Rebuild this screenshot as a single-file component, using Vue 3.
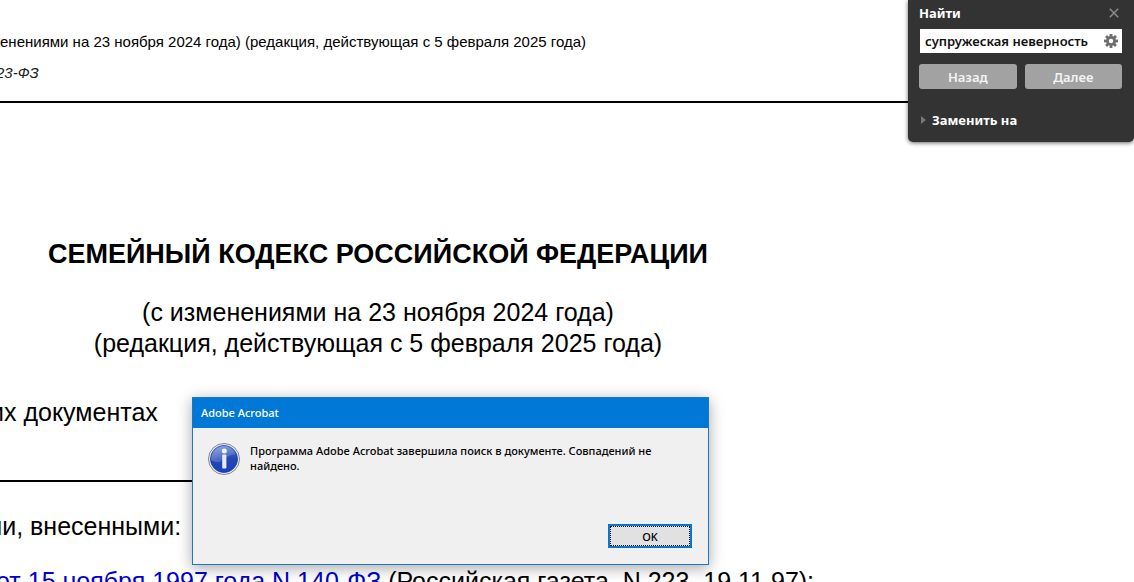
<script setup>
import { ref } from 'vue'

const query = ref('супружеская неверность')
const findOpen = ref(true)
const dialogOpen = ref(true)
const replaceOpen = ref(false)
</script>

<template>
  <div class="viewer">
    <main class="page">
      <header class="running">
        <p class="note">енениями на 23 ноября 2024 года) (редакция, действующая с 5 февраля 2025 года)</p>
        <p class="note number">23-ФЗ</p>
      </header>
      <hr class="rule" />
      <section class="heading">
        <h1>СЕМЕЙНЫЙ КОДЕКС РОССИЙСКОЙ ФЕДЕРАЦИИ</h1>
        <p>(с изменениями на 23 ноября 2024 года)</p>
        <p>(редакция, действующая с 5 февраля 2025 года)</p>
      </section>
      <p class="line">их документах</p>
      <hr class="rule second" />
      <p class="line changes">ми, внесенными:</p>
      <p class="line source"><a href="#law-140">от 15 ноября 1997 года N 140-ФЗ</a> (Российская газета, N 223, 19.11.97);</p>
    </main>

    <form v-if="findOpen" class="find" @submit.prevent>
      <div class="find-head">
        <label for="query">Найти</label>
        <button type="button" class="icon" aria-label="Закрыть" @click="findOpen = false">
          <svg width="10" height="10" viewBox="0 0 10 10"><path d="M.8.8l8.4 8.4M9.2.8L.8 9.2" stroke="#8c8c8c" stroke-width="1.5" /></svg>
        </button>
      </div>
      <div class="field">
        <input id="query" v-model="query" type="text" />
        <button type="button" class="icon" aria-label="Параметры поиска">
          <svg width="14" height="14" viewBox="-7 -7 14 14">
            <g fill="#6e6e6e">
              <rect v-for="n in 4" :key="n" x="-1.4" y="-7" width="2.8" height="14" :transform="`rotate(${n * 45})`" />
              <circle r="5" />
            </g>
            <circle r="2.2" fill="#fff" />
          </svg>
        </button>
      </div>
      <div class="steps">
        <button type="button">Назад</button>
        <button type="submit">Далее</button>
      </div>
      <button type="button" class="replace" :aria-expanded="replaceOpen" @click="replaceOpen = !replaceOpen">
        <svg width="5" height="8" viewBox="0 0 5 8"><path d="M0 0l5 4-5 4z" fill="#777" /></svg>
        Заменить на
      </button>
    </form>

    <section v-if="dialogOpen" class="dialog" role="alertdialog" aria-labelledby="dialog-title" aria-describedby="dialog-text">
      <h2 id="dialog-title">Adobe Acrobat</h2>
      <div class="message">
        <svg width="32" height="32" viewBox="0 0 32 32">
          <defs>
            <linearGradient id="ball" x1="0" y1="0" x2="0" y2="1">
              <stop offset="0" stop-color="#4d74d2" />
              <stop offset=".5" stop-color="#2347b0" />
              <stop offset="1" stop-color="#1c3fc4" />
            </linearGradient>
            <linearGradient id="gloss" x1="0" y1="0" x2="1" y2="1">
              <stop offset="0" stop-color="#fff" stop-opacity=".4" />
              <stop offset="1" stop-color="#fff" stop-opacity=".05" />
            </linearGradient>
          </defs>
          <circle cx="16" cy="16" r="15.5" fill="#e8ecf2" stroke="#7d8799" />
          <circle cx="16" cy="16" r="13.5" fill="url(#ball)" stroke="#1d3a96" stroke-width=".8" />
          <path d="M3 17A13 13 0 0 1 28 11Q18 12 12 19Q8 20 3 17z" fill="url(#gloss)" />
          <circle cx="16.3" cy="8" r="2.5" fill="#f2f5fb" />
          <rect x="14.2" y="11.6" width="4.2" height="14" rx=".8" fill="#e4e9f4" />
        </svg>
        <p id="dialog-text">Программа Adobe Acrobat завершила поиск в документе. Совпадений не<br />найдено.</p>
      </div>
      <div class="actions">
        <button type="button" @click="dialogOpen = false">OK</button>
      </div>
    </section>
  </div>
</template>

<style>
body {
  overflow: hidden;
  background: #fff;
}
</style>

<style scoped>
.viewer {
  position: relative;
  height: 100vh;
  overflow: hidden;
  color: #000;
  font-family: "Liberation Sans", Arial, sans-serif;
}
p, h1, h2 { margin: 0; }
.running { padding-top: 26px; }
.note {
  font-size: 15px;
  line-height: 31px;
  white-space: nowrap;
}
.running .number {
  margin-left: -4px;
  font-style: italic;
  color: #222;
}
.rule {
  height: 2px;
  margin: 13px 0 0;
  border: 0;
  background: #000;
}
.heading {
  max-width: 756px;
  padding-top: 136px;
  text-align: center;
  font-size: 25px;
  line-height: 31px;
}
.heading h1 {
  margin-bottom: 27px;
  font-size: 27px;
  line-height: 31px;
}
.line {
  margin-left: -10px;
  font-size: 25px;
  line-height: 31px;
  white-space: nowrap;
}
.heading + .line { margin-top: 38px; }
.second {
  width: 50%;
  margin-top: 52px;
}
.changes {
  margin-top: 29px;
  margin-left: -15px;
}
.source {
  margin-top: 24px;
  margin-left: -4px;
}
.source a { color: #0000d0; }

button, input {
  margin: 0;
  padding: 0;
  border: 0;
  background: none;
  color: inherit;
  font: inherit;
}
.icon { display: flex; }

.find {
  position: absolute;
  top: 0;
  right: 0;
  box-sizing: border-box;
  width: 226px;
  padding: 3px 12px 12px 11px;
  border-radius: 0 0 5px 5px;
  background: #333;
  box-shadow: 0 1px 4px rgba(0, 0, 0, .6);
  color: #fff;
  font: 700 13px/20px "Noto Sans", "Open Sans", sans-serif;
}
.find-head {
  display: flex;
  justify-content: space-between;
  align-items: center;
  padding-right: 3px;
}
.field {
  display: flex;
  align-items: center;
  height: 24px;
  margin: 6px 0 0 1px;
  padding: 0 4px 0 5px;
  background: #fff;
}
.field input {
  flex: 1;
  min-width: 0;
  color: #111;
  font-weight: 600;
  outline: 0;
}
.steps {
  display: flex;
  gap: 8px;
  margin-top: 11px;
}
.steps button {
  flex: 1;
  height: 25px;
  border-radius: 3px;
  background: #a2a2a2;
  color: #f4f4f4;
  font-weight: 600;
}
.replace {
  display: flex;
  align-items: center;
  gap: 6px;
  margin-top: 21px;
  padding-left: 2px;
}

.dialog {
  position: absolute;
  top: 397px;
  left: 192px;
  box-sizing: border-box;
  width: 517px;
  border: 1px solid #1c78bd;
  background: #f0f0f0;
  box-shadow: 0 3px 14px rgba(0, 0, 0, .35);
  font: 500 11px/15px "Noto Sans", "Open Sans", sans-serif;
}
.dialog h2 {
  padding: 0 8px;
  background: #0078d7;
  color: #fff;
  font-size: 11px;
  font-weight: 500;
  line-height: 30px;
}
.message {
  display: flex;
  gap: 10px;
  padding: 15px 15px 0;
}
.message svg { flex: none; }
.message p { white-space: nowrap; }
.actions {
  display: flex;
  justify-content: flex-end;
  padding: 49px 16px 16px;
}
.actions button {
  width: 84px;
  height: 24px;
  padding: 1px;
  border: 2px solid #0078d7;
  background: #e1e1e1;
  outline: 1px dotted #000;
  outline-offset: -3px;
}
</style>
